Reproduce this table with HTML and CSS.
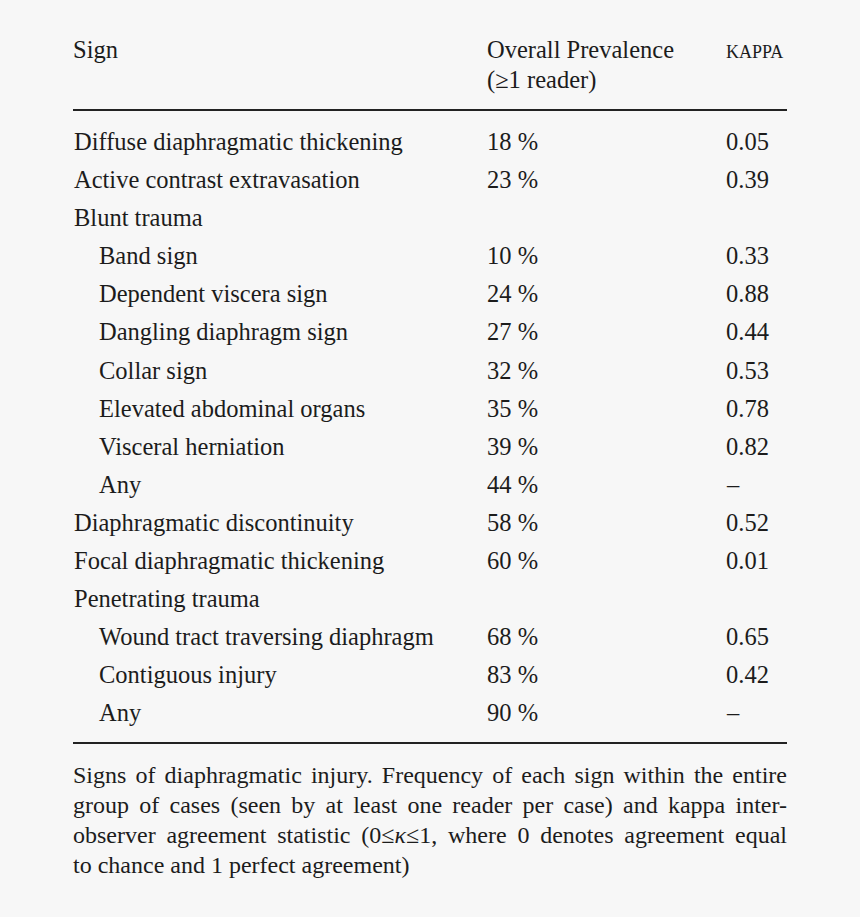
FILE: index.html
```html
<!DOCTYPE html>
<html>
<head>
<meta charset="utf-8">
<link rel="stylesheet" href="styles.css">
</head>
<body>
<div class="page">
  <div class="head">
    <div class="h-sign">Sign</div>
    <div class="h-prev">Overall Prevalence<br>(≥1 reader)</div>
    <div class="h-kappa">KAPPA</div>
  </div>
  <div class="rule"></div>
  <div class="rows">
    <div class="c1">Diffuse diaphragmatic thickening</div><div>18 %</div><div>0.05</div>
    <div class="c1">Active contrast extravasation</div><div>23 %</div><div>0.39</div>
    <div class="c1">Blunt trauma</div><div></div><div></div>
    <div class="c1 ind">Band sign</div><div>10 %</div><div>0.33</div>
    <div class="c1 ind">Dependent viscera sign</div><div>24 %</div><div>0.88</div>
    <div class="c1 ind">Dangling diaphragm sign</div><div>27 %</div><div>0.44</div>
    <div class="c1 ind">Collar sign</div><div>32 %</div><div>0.53</div>
    <div class="c1 ind">Elevated abdominal organs</div><div>35 %</div><div>0.78</div>
    <div class="c1 ind">Visceral herniation</div><div>39 %</div><div>0.82</div>
    <div class="c1 ind">Any</div><div>44 %</div><div class="dash">–</div>
    <div class="c1">Diaphragmatic discontinuity</div><div>58 %</div><div>0.52</div>
    <div class="c1">Focal diaphragmatic thickening</div><div>60 %</div><div>0.01</div>
    <div class="c1">Penetrating trauma</div><div></div><div></div>
    <div class="c1 ind">Wound tract traversing diaphragm</div><div>68 %</div><div>0.65</div>
    <div class="c1 ind">Contiguous injury</div><div>83 %</div><div>0.42</div>
    <div class="c1 ind">Any</div><div>90 %</div><div class="dash">–</div>
  </div>
  <div class="rule rule-bottom"></div>
  <div class="caption">
    <span class="line">Signs of diaphragmatic injury. Frequency of each sign within the entire</span>
    <span class="line">group of cases (seen by at least one reader per case) and kappa inter-</span>
    <span class="line">observer agreement statistic (0≤<i>κ</i>≤1, where 0 denotes agreement equal</span>
    <span class="line last">to chance and 1 perfect agreement)</span>
  </div>
</div>
</body>
</html>
```

FILE: styles.css
```css
html, body {
  margin: 0;
  padding: 0;
  background: #f7f7f7;
}
body {
  font-family: "Liberation Serif", "Times New Roman", serif;
  color: #1c1c1c;
}
.page {
  width: 714px;
  margin-left: 73px;
  padding-top: 35px;
}
.head {
  display: grid;
  grid-template-columns: 414px 239px 61px;
  font-size: 24.5px;
  line-height: 30px;
  padding-bottom: 14px;
}
.h-kappa {
  font-size: 18px;
  padding-top: 2px;
}
.rule {
  height: 2px;
  background: #222;
}
.rows {
  display: grid;
  grid-template-columns: 414px 239px 61px;
  grid-auto-rows: 38.1px;
  font-size: 24.5px;
  line-height: 38px;
  padding-top: 12px;
  padding-bottom: 9px;
  white-space: nowrap;
}
.c1 {
  padding-left: 1px;
}
.ind {
  padding-left: 26px;
}
.dash {
  padding-left: 1px;
}
.caption {
  padding-top: 16px;
  font-size: 24px;
  line-height: 30px;
}
.line {
  display: block;
  text-align: justify;
  text-align-last: justify;
  white-space: nowrap;
}
.line.last {
  text-align-last: left;
}
```
